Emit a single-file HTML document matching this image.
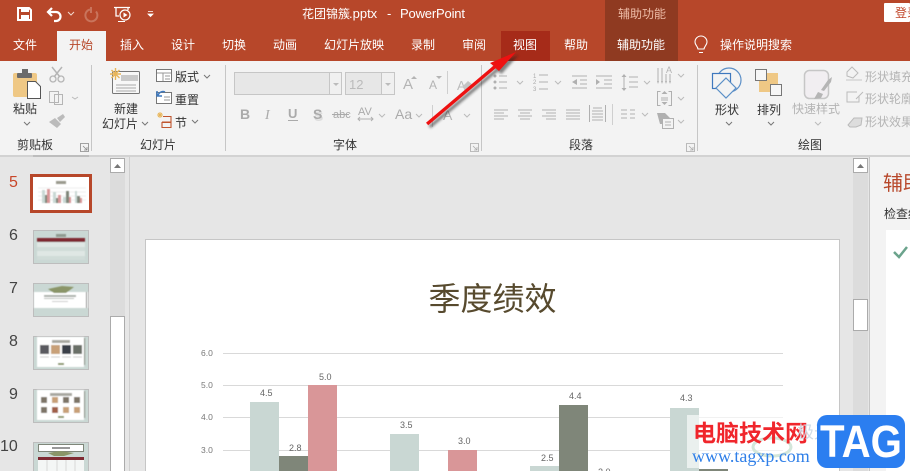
<!DOCTYPE html>
<html><head><meta charset="utf-8">
<style>
html,body{margin:0;padding:0;width:910px;height:471px;overflow:hidden;background:#e6e6e6}
svg{position:absolute;left:0;top:0;display:block}
text{font-family:"Liberation Sans","Noto Sans CJK SC",sans-serif;font-size:12px}
.w{fill:#fff}.d{fill:#333}.g{fill:#b4b4b4}
.ln{stroke:#b0b0b0;stroke-width:1;fill:none}
.ch{stroke:#777;stroke-width:1;fill:none}
.chg{stroke:#bbb;stroke-width:1;fill:none}
.s{font-size:9px;fill:#666}
.ax{font-size:8.500px;fill:#777}
</style></head><body>
<svg width="910" height="471" viewBox="0 0 910 471" xmlns="http://www.w3.org/2000/svg">
<defs>
<filter id="sh" x="-20%" y="-20%" width="140%" height="140%"><feGaussianBlur stdDeviation="1.300"/></filter>
<filter id="bl" x="-5%" y="-5%" width="110%" height="110%"><feGaussianBlur stdDeviation=".45"/></filter>
</defs>
<!-- title + tab bar -->
<rect width="910" height="61" fill="#B7472A"/>
<rect x="605" width="73" height="61" fill="#8F3A21"/>
<rect x="501" y="31" width="49" height="30" fill="#A62B19"/>
<rect x="57" y="31" width="49" height="30" fill="#f3f3f3"/>
<rect y="61" width="910" height="94" fill="#f3f3f3"/>
<rect y="155" width="910" height="2" fill="#d2d2d2"/>
<!-- QAT -->
<path d="M18 8h11l2 2v10h-13z" fill="none" stroke="#fff" stroke-width="2"/>
<rect x="21" y="8" width="8" height="4" fill="#fff"/><rect x="21" y="15" width="8" height="6" fill="#fff"/>
<path d="M48 12h8a4.500 4.500 0 0 1 0 9h-2M52 8l-4 4 4 4" fill="none" stroke="#fff" stroke-width="2.200"/>
<path d="M68 12l3 3 3-3" fill="none" stroke="#f3d8cc" stroke-width="1"/>
<path d="M90 9.500a6 6 0 1 0 6 2M91 7v6" fill="none" stroke="#c9745c" stroke-width="2"/>
<path d="M114 7.500h16M116 8v8h3M128 8v2" fill="none" stroke="#fff" stroke-width="1.300"/><circle cx="125" cy="15" r="5" fill="none" stroke="#fff" stroke-width="1.200"/><path d="M123.500 12.500l4 2.500-4 2.500z" fill="#fff"/><path d="M118 21.500h7" stroke="#fff"/>
<path d="M148 11.500h5M148 14h5l-2.500 2.500z" fill="#fff" stroke="#fff" stroke-width=".8"/>
<text x="302" y="18" class="w">花团锦簇</text><text x="349" y="18" class="w" style="font-size:13px">.pptx</text><text x="387" y="18" class="w" style="font-size:13px">-</text><text x="400" y="18" class="w" style="font-size:13px" textLength="65">PowerPoint</text>
<text x="618" y="18" fill="#EDBBA6">辅助功能</text>
<rect x="884" y="3" width="26" height="19" fill="#fff" rx="1"/><text x="895" y="17" fill="#C0462A">登录</text>
<!-- tabs -->
<text x="13" y="49" class="w">文件</text>
<text x="69" y="49" fill="#B7472A">开始</text>
<text x="120" y="49" class="w">插入</text>
<text x="171" y="49" class="w">设计</text>
<text x="222" y="49" class="w">切换</text>
<text x="273" y="49" class="w">动画</text>
<text x="324" y="49" class="w">幻灯片放映</text>
<text x="411" y="49" class="w">录制</text>
<text x="462" y="49" class="w">审阅</text>
<text x="513" y="49" class="w">视图</text>
<text x="564" y="49" class="w">帮助</text>
<text x="617" y="49" class="w">辅助功能</text>
<text x="720" y="49" class="w">操作说明搜索</text>
<path d="M698 49c-.5-3-3-4-3-7a6 6 0 0 1 12 0c0 3-2.500 4-3 7zM699 52.500h4" fill="none" stroke="#fff" stroke-width="1.100"/>
<!-- separators -->
<g fill="#c6c6c6"><rect x="91" y="65" width="1" height="86"/><rect x="225" y="65" width="1" height="86"/><rect x="481" y="65" width="1" height="86"/><rect x="697" y="65" width="1" height="86"/></g>
<!-- clipboard -->
<rect x="13" y="73" width="24" height="24" rx="2" fill="#EFC885"/>
<rect x="17" y="73" width="15" height="5" rx="1" fill="#6b6b6b"/><rect x="22" y="69" width="6" height="5" fill="#6b6b6b"/>
<path d="M27.500 81.500h8l5 5v12h-13z" fill="#fff" stroke="#555"/>
<text x="13" y="113" class="d">粘贴</text>
<path d="M24 122l3 3 3-3" class="ch"/>
<path d="M52 67l8 10M62 67l-8 10" stroke="#b5b5b5" stroke-width="1.500"/><circle cx="53" cy="79" r="3" fill="none" stroke="#b5b5b5" stroke-width="1.300"/><circle cx="61" cy="79" r="3" fill="none" stroke="#b5b5b5" stroke-width="1.300"/>
<path d="M49.500 91.500h9v11h-9zM54.500 94.500h8v10h-8z" fill="#f3f3f3" stroke="#b5b5b5"/><path d="M72 97l3 2 3-2" class="chg"/>
<path d="M49 122l8 6 4-4-6-6zM57 118l6-4 2 3-5 5z" fill="#bbb"/>
<text x="17" y="149" class="d">剪贴板</text>
<path d="M80.500 143.500h8v8h-8zM83 146l4 4M87 147v3h-3" fill="none" stroke="#888" stroke-width=".8"/>
<!-- slides -->
<rect x="112.500" y="71.500" width="27" height="22" rx="1" fill="#f7f7f7" stroke="#777"/><rect x="121" y="75" width="17" height="6" fill="#c9c9c9"/><path d="M116 85h20M116 88h20M116 91h20" stroke="#aaa"/>
<g fill="none" stroke="#E8B558" stroke-width="1.400"><path d="M110 74h11M115.500 68v12M111.500 70l8 8M119.500 70l-8 8"/></g>
<text x="114" y="113" class="d">新建</text><text x="102" y="128" class="d">幻灯片</text><path d="M142 122l3 3 3-3" class="ch"/>
<rect x="156.500" y="69.500" width="15" height="12" fill="#fff" stroke="#777"/><path d="M157 73h14M163 73v8M165 76h5M165 79h5" stroke="#999"/>
<text x="175" y="81" class="d">版式</text><path d="M204 75l3 3 3-3" class="ch"/>
<rect x="156.500" y="92.500" width="15" height="11" fill="#fff" stroke="#777"/><path d="M165 92a5 5 0 0 0-7 4M157 91v5h5" fill="none" stroke="#3E78BE" stroke-width="1.500"/><path d="M164 97h6M164 100h6" stroke="#999"/>
<text x="175" y="104" class="d">重置</text>
<path d="M157 115h6M160 112v6M158 113l4 4M162 113l-4 4" stroke="#E8B558"/><path d="M163 116.500h8v11h-9v-5h9M162 122h9" fill="none" stroke="#C0562F" stroke-width="1.100"/>
<text x="175" y="127" class="d">节</text><path d="M192 120l3 3 3-3" class="ch"/>
<text x="140" y="149" class="d">幻灯片</text>
<!-- font -->
<rect x="234.500" y="72.500" width="107" height="22" fill="#e7e7e7" stroke="#c6c6c6"/><path d="M329.500 73v21" stroke="#c6c6c6"/><rect x="330" y="73" width="11" height="21" fill="#f0f0f0"/><path d="M333 83h6l-3 3z" fill="#bbb"/>
<rect x="345.500" y="72.500" width="49" height="22" fill="#e7e7e7" stroke="#c6c6c6"/><path d="M381.500 73v21" stroke="#c6c6c6"/><rect x="382" y="73" width="12" height="21" fill="#f0f0f0"/><path d="M385 83h6l-3 3z" fill="#bbb"/>
<text x="349" y="89" fill="#bbb" style="font-size:13px">12</text>
<text x="403" y="89" fill="#b4b4b4" style="font-size:15px">A</text><path d="M411 79h6l-3-3z" fill="#b4b4b4"/>
<text x="429" y="89" fill="#b4b4b4" style="font-size:12px">A</text><path d="M436 76h6l-3 3z" fill="#b4b4b4"/>
<path d="M447.500 71v23" stroke="#cfcfcf"/>
<text x="457" y="90" fill="#bbb" style="font-size:13px">A</text><path d="M462 87l6-6 5 4-6 6z" fill="#c4c4c4"/>
<text x="240" y="119" fill="#aaa" style="font-size:14px;font-weight:bold">B</text>
<text x="265" y="119" fill="#aaa" style="font-size:14px;font-style:italic;font-family:'Liberation Serif',serif">I</text>
<text x="288" y="118" fill="#aaa" style="font-size:13px;font-weight:bold">U</text><path d="M288 120.500h10" stroke="#aaa"/>
<text x="314" y="121" fill="#ddd" style="font-size:14px;font-weight:bold">S</text><text x="313" y="119" fill="#aaa" style="font-size:14px;font-weight:bold">S</text>
<text x="333" y="118" fill="#aaa" style="font-size:11px">abc</text><path d="M332 114.500h17" stroke="#aaa"/>
<text x="358" y="115" fill="#aaa" style="font-size:11px">AV</text><path d="M358 119h15M360 117l-2 2 2 2M371 117l2 2-2 2" class="ln"/>
<path d="M379 114l3 3 3-3" class="chg"/>
<text x="395" y="119" fill="#aaa" style="font-size:14px">Aa</text><path d="M416 114l3 3 3-3" class="chg"/>
<path d="M432.500 105v22" stroke="#cfcfcf"/>
<text x="443" y="120" fill="#b4b4b4" style="font-size:14px">A</text><path d="M464 114l3 3 3-3" class="chg"/>
<text x="333" y="149" class="d">字体</text>
<path d="M470.500 143.500h8v8h-8zM473 146l4 4M477 147v3h-3" fill="none" stroke="#aaa" stroke-width=".8"/>
<!-- paragraph -->
<g class="ln">
<path d="M499 76h8M499 82h8M499 88h8"/>
<path d="M539 75h9M539 82h9M539 89h9"/>
<path d="M572 76h15M580 80h7M580 84h7M572 88h15"/>
<path d="M596 76h16M604 80h8M604 84h8M596 88h16"/>
<path d="M629 77h9M629 82h9M629 87h9M624 76v13"/>
<path d="M658 68v14M662 68v14M666 74v8M670 74v8"/>
<path d="M660.500 91.500h-3v14h3M668.500 91.500h3v14h-3"/>
<path d="M661 98h7M661 100h7"/>
<path d="M494 110h14M494 113h10M494 116h14M494 119h10"/>
<path d="M518 110h14M520 113h10M518 116h14M520 119h10"/>
<path d="M542 110h14M546 113h10M542 116h14M546 119h10"/>
<path d="M566 110h14M566 113h14M566 116h14M566 119h14"/>
<path d="M589.500 105v17M605.500 105v17M592 111h11M592 114h11M592 117h11M592 120h11M593 108h9"/>
<path d="M612.500 104v21" stroke="#cfcfcf"/>
<path d="M621 110h6M630 110h5M621 114h6M630 114h5M621 118h6M630 118h5"/>
<rect x="662.500" y="118.500" width="11" height="10" fill="#f3f3f3"/><path d="M665 122h6M665 125h6"/>
</g>
<g fill="#b0b0b0">
<circle cx="495" cy="76" r="1.500"/><circle cx="495" cy="82" r="1.500"/><circle cx="495" cy="88" r="1.500"/>
<path d="M572 82l5-3v6zM612 0M600 82l-4-3v6zM624 74l2.500 3h-5zM624 91l2.500-3h-5zM657 81l1 3 1-3zM661 81l1 3 1-3zM665 81l1 3 1-3zM669 81l1 3 1-3z"/>
<path d="M657 113h8l5 5h-8l1 6h-3z"/>
<path d="M664.500 91l3 3h-6zM664.500 105l3-3h-6z"/>
</g>
<text x="533" y="78" fill="#aaa" style="font-size:6px">1</text><text x="533" y="84" fill="#aaa" style="font-size:6px">2</text><text x="533" y="91" fill="#aaa" style="font-size:6px">3</text>
<text x="666" y="73" fill="#b4b4b4" style="font-size:9px">A</text>
<path d="M517 81l3 3 3-3M555 81l3 3 3-3M644 81l3 3 3-3M678 74l3 3 3-3M678 97l3 3 3-3M678 120l3 3 3-3M642 113l3 3 3-3" class="chg"/>
<text x="569" y="149" class="d">段落</text>
<path d="M686.500 143.500h8v8h-8zM689 146l4 4M693 147v3h-3" fill="none" stroke="#aaa" stroke-width=".8"/>
<!-- drawing -->
<circle cx="729" cy="80" r="12" fill="none" stroke="#5B8FC7" stroke-width="1.200"/>
<rect x="712.500" y="73.500" width="18" height="15" fill="#f3f3f3" stroke="#3E78BE" stroke-width="1.200"/>
<path d="M726 78l10 10-10 10-10-10z" fill="#f3f3f3" stroke="#5B8FC7" stroke-width="1.200"/>
<text x="715" y="114" class="d">形状</text><path d="M726 122l3 3 3-3" class="ch"/>
<rect x="759" y="73" width="19" height="19" fill="#EFC885"/>
<rect x="755.500" y="69.500" width="11" height="11" fill="#f6f6f6" stroke="#777"/>
<rect x="770.500" y="84.500" width="11" height="11" fill="#f6f6f6" stroke="#777"/>
<text x="757" y="114" class="d">排列</text><path d="M768 122l3 3 3-3" class="ch"/>
<rect x="804.500" y="70.500" width="24" height="28" rx="5" fill="#f1eef1" stroke="#c6c6c6" stroke-width="1.500"/>
<path d="M821 90l7-10 4-3-1 5-7 9zM814 99l4-7 5 2-2 4z" fill="#b5b5b5"/>
<text x="792" y="113" fill="#b4b4b4">快速样式</text><path d="M815 122l3 3 3-3" class="chg"/>
<path d="M847 72l5-5 6 6-5 5-6-2z" fill="none" stroke="#bbb"/><rect x="846" y="79" width="16" height="2" fill="#ddd"/>
<text x="865" y="81" class="g">形状填充</text>
<path d="M857 92h-10v10h12v-6M856 99l7-7" fill="none" stroke="#bbb"/>
<text x="865" y="103" class="g">形状轮廓</text>
<path d="M848 125l6-7h8l-1 7-5 2h-6z" fill="#ddd" stroke="#bbb"/>
<text x="865" y="126" class="g">形状效果</text>
<text x="798" y="149" class="d">绘图</text>
<!-- left panel -->
<rect y="157" width="130" height="314" fill="#e6e6e6"/>
<rect x="33" y="155" width="56" height="2" fill="#bdbdbd"/>
<rect x="110" y="158" width="15" height="158" fill="#dcdcdc"/>
<rect x="110.500" y="158.500" width="14" height="14" fill="#fff" stroke="#ababab"/><path d="M114 168h7l-3.500-4z" fill="#777"/>
<rect x="110.500" y="316.500" width="14" height="160" fill="#fff" stroke="#ababab"/>
<rect x="129" y="157" width="1" height="314" fill="#cfcfcf"/>
<text x="9" y="187" fill="#C8472A" style="font-size:16px">5</text>
<text x="9" y="240" fill="#444" style="font-size:16px">6</text>
<text x="9" y="293" fill="#444" style="font-size:16px">7</text>
<text x="9" y="346" fill="#444" style="font-size:16px">8</text>
<text x="9" y="399" fill="#444" style="font-size:16px">9</text>
<text x="0" y="451" fill="#444" style="font-size:16px">10</text>
<!-- thumb 5 -->
<rect x="30" y="174" width="62" height="39" fill="#B7472A"/><rect x="33" y="177" width="56" height="33" fill="#fff"/>
<g filter="url(#bl)">
<rect x="56" y="181" width="10" height="3" fill="#9a9a8e"/>
<path d="M38 188h48M38 192h48M38 196h48M38 200h48" stroke="#eee"/>
<rect x="42" y="190" width="3" height="13" fill="#c9d8d4"/><rect x="45" y="195" width="2" height="8" fill="#7f8679"/><rect x="47" y="189" width="3" height="14" fill="#d99698"/>
<rect x="53" y="192" width="3" height="11" fill="#c9d8d4"/><rect x="56" y="198" width="2" height="5" fill="#7f8679"/><rect x="58" y="195" width="3" height="8" fill="#d99698"/>
<rect x="63" y="197" width="3" height="6" fill="#c9d8d4"/><rect x="66" y="191" width="3" height="12" fill="#7f8679"/><rect x="69" y="197" width="2" height="6" fill="#d99698"/>
<rect x="75" y="191" width="2" height="12" fill="#c9d8d4"/><rect x="77" y="196" width="3" height="7" fill="#7f8679"/><rect x="80" y="198" width="2" height="5" fill="#d99698"/>
</g>
<!-- thumb 6 -->
<rect x="33.500" y="230.500" width="55" height="33" fill="#CAD8D4" stroke="#bdbdbd"/>
<g filter="url(#bl)">
<rect x="56" y="234" width="10" height="3" fill="#8f9a90"/><rect x="37" y="238" width="48" height="4" fill="#7f2b33"/>
<rect x="37" y="242" width="48" height="5" fill="#dfe7e4"/><rect x="37" y="247" width="48" height="4" fill="#d0dcd8"/><rect x="37" y="251" width="48" height="5" fill="#dfe7e4"/><rect x="37" y="256" width="48" height="4" fill="#d0dcd8"/>
</g>
<!-- thumb 7 -->
<rect x="33.500" y="283.500" width="55" height="33" fill="#CAD8D4" stroke="#bdbdbd"/>
<g filter="url(#bl)">
<rect x="34" y="292" width="54" height="16" fill="#fff"/><rect x="86" y="292" width="1" height="16" fill="#777"/>
<path d="M48 289l14-3 12 1-8 6h-12z" fill="#8a9568"/><rect x="44" y="295" width="32" height="2" fill="#aab0ac"/><rect x="44" y="298" width="30" height="1" fill="#b9bdb9"/><rect x="52" y="301" width="16" height="1" fill="#ccc"/>
</g>
<!-- thumb 8 -->
<rect x="33.500" y="336.500" width="55" height="33" fill="#CAD8D4" stroke="#bdbdbd"/>
<g filter="url(#bl)">
<rect x="37" y="337" width="47" height="30" fill="#fff"/><rect x="84" y="338" width="1" height="27" fill="#7f8679"/>
<rect x="52" y="340" width="18" height="3" fill="#a8a8a0"/>
<rect x="40" y="345" width="9" height="9" fill="#5a5a60"/><rect x="51" y="345" width="9" height="9" fill="#c8a078"/><rect x="62" y="345" width="9" height="9" fill="#3a3f4a"/><rect x="73" y="345" width="9" height="9" fill="#6a7068"/>
<path d="M40 357h9M51 357h9M62 357h9M73 357h9" stroke="#ccc"/><rect x="58" y="363" width="6" height="2" fill="#8a9568"/>
</g>
<!-- thumb 9 -->
<rect x="33.500" y="389.500" width="55" height="33" fill="#CAD8D4" stroke="#bdbdbd"/>
<g filter="url(#bl)">
<rect x="37" y="390" width="47" height="30" fill="#fff"/><rect x="84" y="391" width="1" height="27" fill="#7f8679"/>
<rect x="50" y="393" width="22" height="3" fill="#a8a8a0"/>
<g fill="#7d7468"><rect x="41" y="397" width="6" height="6"/><rect x="52" y="397" width="6" height="6" fill="#c8a078"/><rect x="63" y="397" width="6" height="6"/><rect x="74" y="397" width="6" height="6"/><rect x="41" y="407" width="6" height="6"/><rect x="52" y="407" width="6" height="6" fill="#a0604a"/><rect x="63" y="407" width="6" height="6" fill="#c8a078"/><rect x="74" y="407" width="6" height="6" fill="#c8a078"/></g>
<rect x="58" y="416" width="6" height="2" fill="#8a9568"/>
</g>
<!-- thumb 10 -->
<rect x="33.500" y="442.500" width="55" height="33" fill="#CAD8D4" stroke="#bdbdbd"/>
<rect x="38.500" y="444.500" width="45" height="7" fill="#fff" stroke="#7f8679"/><rect x="52" y="447" width="18" height="2" fill="#999"/>
<path d="M48 453l12-2 14 2-10 3h-10z" fill="#8a9568"/>
<rect x="38" y="457" width="46" height="3" fill="#7f2b33"/><rect x="38" y="460" width="46" height="11" fill="#f4f6f5"/>
<path d="M47 460v11M57 460v11M66 460v11M75 460v11" stroke="#d8d8d8"/>
<!-- slide -->
<rect x="145.500" y="239.500" width="694" height="240" fill="#fff" stroke="#c6c6c6"/>
<text x="428.500" y="310" fill="#574A2E" style="font-size:32px">季度绩效</text>
<path d="M223 353.500h560M223 385.500h560M223 417.500h560M223 450.500h560" stroke="#d9d9d9"/>
<text class="ax" x="201" y="356">6.0</text><text class="ax" x="201" y="388">5.0</text><text class="ax" x="201" y="420">4.0</text><text class="ax" x="201" y="453">3.0</text>
<text class="s" x="260" y="396">4.5</text><text class="s" x="289" y="451">2.8</text><text class="s" x="319" y="380">5.0</text>
<text class="s" x="400" y="428">3.5</text><text class="s" x="458" y="444">3.0</text>
<text class="s" x="541" y="461">2.5</text><text class="s" x="569" y="399">4.4</text><text class="s" x="598" y="475">2.0</text>
<text class="s" x="680" y="401">4.3</text>
<rect x="250" y="402" width="29" height="69" fill="#C9D7D3"/><rect x="279" y="456" width="29" height="15" fill="#7F8679"/><rect x="308" y="385" width="29" height="86" fill="#D99698"/>
<rect x="390" y="434" width="29" height="37" fill="#C9D7D3"/><rect x="448" y="450" width="29" height="21" fill="#D99698"/>
<rect x="530" y="466" width="29" height="5" fill="#C9D7D3"/><rect x="559" y="405" width="29" height="66" fill="#7F8679"/>
<rect x="670" y="408" width="29" height="63" fill="#C9D7D3"/><rect x="699" y="469" width="29" height="2" fill="#7F8679"/>
<!-- right scrollbar + pane -->
<rect x="853" y="158" width="15" height="313" fill="#dcdcdc"/>
<rect x="853.500" y="158.500" width="14" height="14" fill="#fff" stroke="#ababab"/><path d="M857 168h7l-3.500-4z" fill="#777"/>
<rect x="853.500" y="299.500" width="14" height="31" fill="#fff" stroke="#ababab"/>
<rect x="869" y="157" width="1" height="314" fill="#c6c6c6"/>
<rect x="870" y="157" width="40" height="314" fill="#f3f3f3"/>
<text x="883" y="190" fill="#B7472A" style="font-size:20px">辅助</text>
<text x="884" y="218" fill="#333">检查结果</text>
<rect x="886" y="230" width="24" height="241" fill="#fff"/>
<path d="M894 252l5 5 8-10" fill="none" stroke="#6BA38C" stroke-width="2.500"/>
<!-- arrow -->
<polygon points="426,122.700 493.400,65.700 490,63 516,52 499,71 495.600,68.300 428.200,125.300" fill="#222" opacity=".55" transform="translate(2.500 3)" filter="url(#sh)"/>
<polygon points="426,122.700 493.400,65.700 490,63 516,52 499,71 495.600,68.300 428.200,125.300" fill="#EE1111"/>
<!-- watermark -->
<rect x="687" y="415" width="125" height="53" fill="#fff" opacity=".62"/>
<ellipse cx="772" cy="447" rx="19" ry="9" fill="none" stroke="#d3e6da" stroke-width="3"/>
<text x="693" y="441" fill="#F0262C" style="font-size:23px;font-weight:bold">电脑技术网</text>
<text x="692" y="462" fill="#2F7FE8" style="font-size:18px;font-family:'Liberation Serif',serif">www.tagxp.com</text>
<text x="797" y="438" fill="#cfdbe6" style="font-size:17px">极光</text>
<rect x="817" y="415" width="88" height="53" rx="10" fill="#2B7EF0"/>
<text x="820" y="457" fill="#fff" textLength="82" lengthAdjust="spacingAndGlyphs" style="font-size:45px;font-weight:bold">TAG</text>
</svg>
</body></html>
